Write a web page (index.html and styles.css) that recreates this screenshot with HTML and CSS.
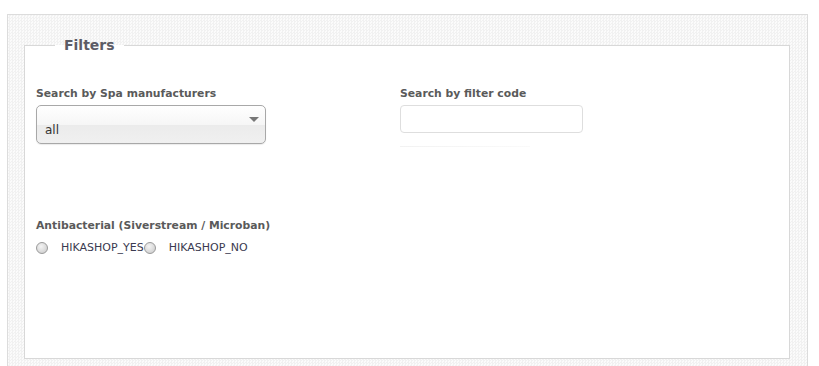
FILE: index.html
```html
<!DOCTYPE html>
<html lang="en">
<head>
  <meta charset="UTF-8">
  <title>Filters</title>
  <link rel="stylesheet" href="styles.css">
</head>
<body>
  <div class="panel">
    <fieldset class="filters">
      <legend>Filters</legend>
      <div class="row">
        <div class="field">
          <label for="manufacturer">Search by Spa manufacturers</label>
          <div class="select">
            <span>all</span>
            <span class="arrow"></span>
          </div>
        </div>
        <div class="field">
          <label for="code">Search by filter code</label>
          <input type="text" id="code" class="code" />
          <div class="underline"></div>
        </div>
      </div>
      <div class="field radios-field">
        <label>Antibacterial (Siverstream / Microban)</label>
        <div class="radios">
          <span class="radio"></span><span class="opt">HIKASHOP_YES</span><span class="radio"></span><span class="opt">HIKASHOP_NO</span>
        </div>
      </div>
    </fieldset>
  </div>
</body>
</html>
```

FILE: styles.css
```css
body {
  margin: 0;
  background: #fff;
  font-family: Tahoma, "DejaVu Sans", sans-serif;
  overflow: hidden;
}
.panel {
  margin: 14px 0 0 7px;
  width: 801px;
  height: 400px;
  border: 1px solid #dcdcdc;
  background-color: #f6f6f6;
  background-image: repeating-conic-gradient(#f1f1f1 0 25%, #fbfbfb 0 50%);
  background-size: 3px 3px;
  padding: 22px 17px 0 16px;
  box-sizing: border-box;
}
.filters {
  margin: 0;
  height: 322px;
  box-sizing: border-box;
  border: 1px solid #d8d8d8;
  background: #fff;
  padding: 34px 11px 0 11px;
}
legend {
  margin-left: 19px;
  padding: 0 9px;
  font-weight: bold;
  font-size: 14px;
  color: #5c5c66;
}
.row {
  display: grid;
  grid-template-columns: 364px 200px;
}
.field label {
  display: block;
  font-weight: bold;
  font-size: 10.8px;
  color: #5a5a5a;
  margin-bottom: 5px;
}
.select {
  width: 230px;
  height: 39px;
  box-sizing: border-box;
  border: 1px solid #a8a8a8;
  border-radius: 5px;
  background: linear-gradient(#ffffff 0%, #f6f6f6 50%, #ebebeb 51%, #f0f0f0 100%);
  box-shadow: 0 1px 1px rgba(0,0,0,0.08);
  position: relative;
  font-size: 12px;
  color: #333;
}
.select span:first-child {
  position: absolute;
  left: 8px;
  top: 17px;
}
.arrow {
  position: absolute;
  right: 6px;
  top: 11px;
  border-left: 5px solid transparent;
  border-right: 5px solid transparent;
  border-top: 5px solid #777;
}
.code {
  display: block;
  width: 183px;
  height: 28px;
  box-sizing: border-box;
  margin: 0;
  border: 1px solid #dedede;
  border-radius: 4px;
  background: #fff;
}
.underline {
  margin-top: 13px;
  width: 130px;
  height: 1px;
  background: linear-gradient(90deg, #f2f2f2, #fafafa);
}
.radios-field {
  margin-top: 72px;
}
.radios-field label {
  margin-bottom: 9px;
}
.radios {
  display: flex;
  align-items: center;
  font-size: 11px;
  color: #3a3a50;
}
.radio {
  width: 12px;
  height: 12px;
  box-sizing: border-box;
  border-radius: 50%;
  border: 1px solid #9a9a9a;
  background: radial-gradient(circle at 40% 35%, #f4f4f4, #c8c8c8);
}
.opt {
  margin-left: 13px;
}
```
